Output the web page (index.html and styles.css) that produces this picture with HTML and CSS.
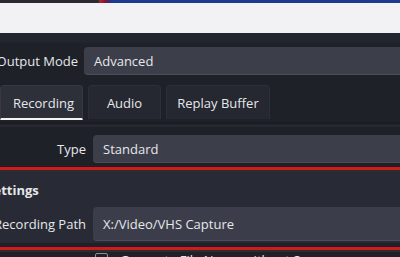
FILE: index.html
```html
<!DOCTYPE html>
<html lang="en">
<head>
    <meta charset="UTF-8">
    <title>Output Settings</title>
    <link rel="stylesheet" href="styles.css">
</head>
<body>
    <div class="titlebar"></div>
    <div class="whitebar"></div>
    <div class="topgap"></div>

    <div class="row mode-row">
        <div class="label mode-label">Output Mode</div>
        <div class="select">Advanced</div>
    </div>

    <div class="tabs">
        <div class="tab active">Recording</div>
        <div class="tab">Audio</div>
        <div class="tab">Replay Buffer</div>
    </div>
    <div class="tabline"></div>

    <div class="row type-row">
        <div class="label">Type</div>
        <div class="select">Standard</div>
    </div>

    <div class="redline"></div>
    <div class="settings">
        <div class="section-title">Recording Settings</div>
        <div class="row path-row">
            <div class="label">Recording Path</div>
            <div class="select field">X:/Video/VHS Capture</div>
        </div>
    </div>
    <div class="redline"></div>

    <div class="check-row">
        <span class="checkbox"></span>
        <span class="check-label">Generate File Name without Space</span>
    </div>
</body>
</html>
```

FILE: styles.css
```css
body {
    margin: 0;
    width: 400px;
    height: 257px;
    overflow: hidden;
    background: #1f2128;
    color: #e6e7ea;
    font-family: "Open Sans", "Noto Sans", sans-serif;
    font-size: 13px;
}
.titlebar {
    height: 3px;
    background: linear-gradient(to right, #2a2b30 0, #2a2b30 98px, #b4222a 100px, #6a1a40 106px, #1e3a8c 112px, #1f3b8f 100%);
}
.whitebar {
    height: 30px;
    background: #f2f2f4;
}
.topgap {
    height: 14px;
    background: linear-gradient(#23262e 0, #23262e 9px, #1f2128 10px);
}
.row {
    display: flex;
    align-items: center;
    margin-left: -13px;
}
.label {
    width: 106px;
    flex: none;
    text-align: right;
    padding-right: 7px;
    box-sizing: border-box;
    white-space: nowrap;
}
.mode-row {
    height: 28px;
    margin-left: -14px;
}
.mode-label {
    width: 98px;
    padding-right: 6px;
}
.select {
    flex: 1;
    height: 28px;
    line-height: 28px;
    background: #3c3e4a;
    border-bottom: 1px solid #4a4d5a;
    border-radius: 4px 0 0 4px;
    padding-left: 10px;
    box-sizing: border-box;
}
.tabs {
    display: flex;
    gap: 5px;
    margin-top: 10px;
    height: 37px;
}
.tab {
    height: 34px;
    line-height: 34px;
    padding: 0 10px;
    background: #252731;
    border: 1px solid #2c2f39;
    border-bottom: none;
    border-radius: 4px 4px 0 0;
    box-sizing: border-box;
}
.tab:nth-child(2) { width: 73px; text-align: center; }
.tab:nth-child(3) { width: 104px; text-align: center; }
.tab.active {
    width: 83px;
    height: 35px;
    padding-left: 12px;
    background: #2d3039;
    border-color: #363944;
    border-bottom: 2px solid #f4f4f6;
}
.tabline {
    height: 5px;
    background: linear-gradient(#1b1d23 0, #1b1d23 2px, #262932 3px);
}
.type-row {
    margin-top: 8px;
    height: 28px;
}
.redline {
    height: 6px;
    margin-top: 3px;
    background: linear-gradient(#2a1a20 0, #2a1a20 1px, #cc1d1d 1px, #cc1d1d 4px, #2f2a30 4px);
}
.settings {
    background: #282b35;
    padding-top: 8px;
    padding-bottom: 2px;
}
.section-title {
    font-weight: bold;
    margin-left: -82px;
    height: 20px;
    line-height: 20px;
    white-space: nowrap;
}
.path-row {
    margin-top: 7px;
    height: 34px;
}
.field {
    height: 34px;
    line-height: 34px;
    background: #3b3e4a;
}
.check-row {
    display: flex;
    align-items: flex-start;
    gap: 12px;
    padding-left: 95px;
    margin-top: 1px;
}
.checkbox {
    width: 13px;
    height: 13px;
    flex: none;
    border: 1px solid #8c8f99;
    border-radius: 2px;
    box-sizing: border-box;
}
.check-label {
    line-height: 13px;
    margin-top: 1px;
    white-space: nowrap;
}
```
